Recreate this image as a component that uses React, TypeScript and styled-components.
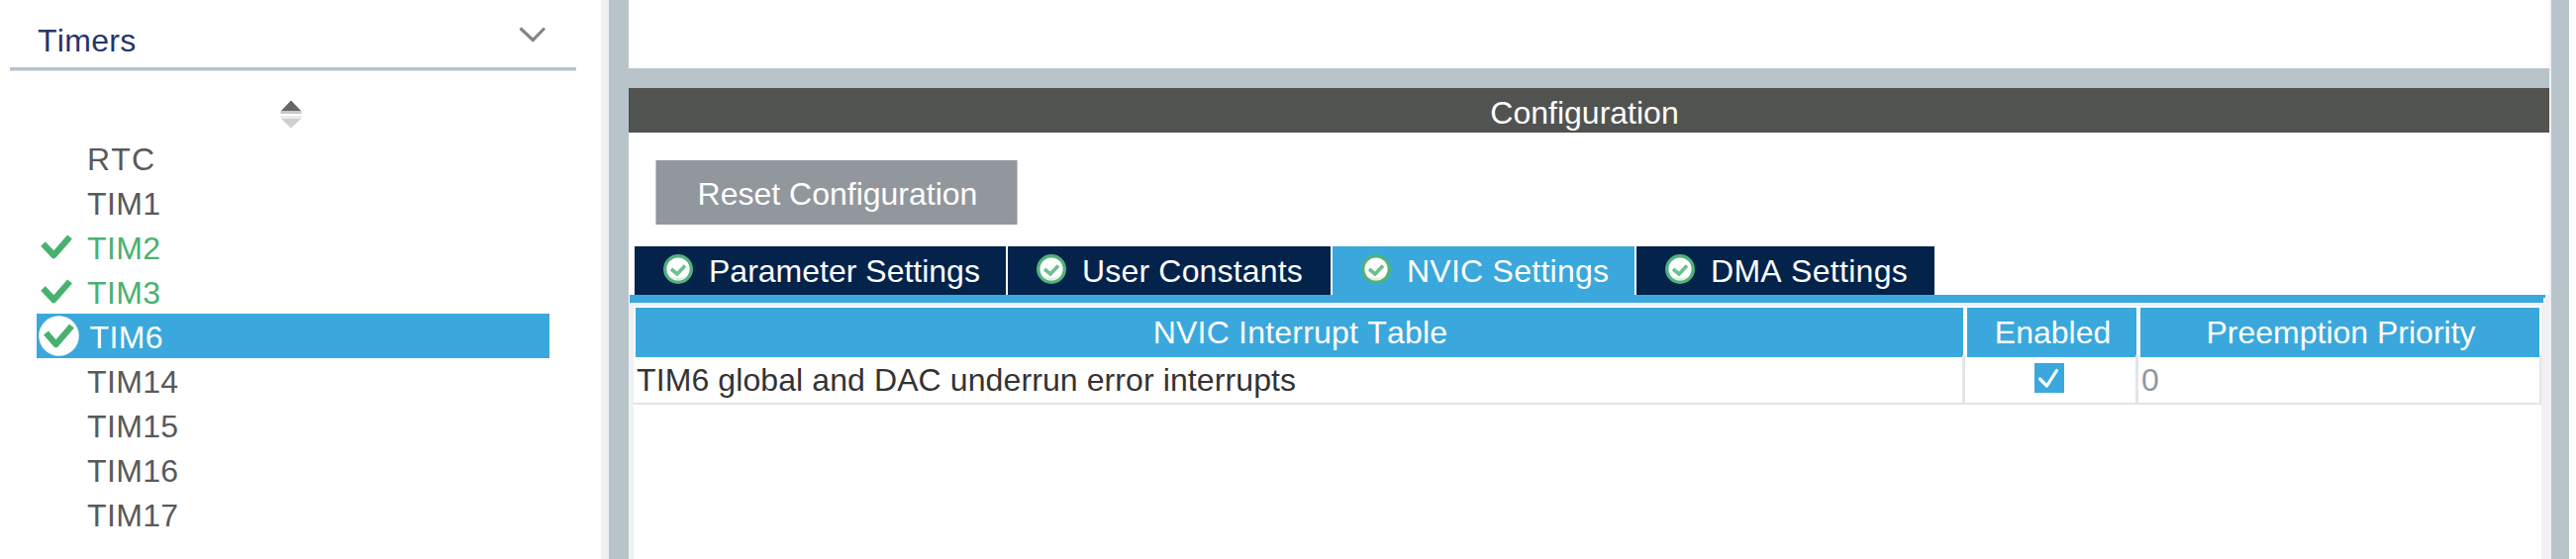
import React from "react";
import styled, { createGlobalStyle } from "styled-components";

const colors = {
  blue: "#3aa8dc",
  navy: "#03234b",
  steel: "#b8c4ca",
  light: "#f0f1f2",
  green: "#49b170",
  grid: "#e1e5e8",
};

const GlobalStyle = createGlobalStyle`
  * { box-sizing: border-box; }
  body {
    margin: 0;
    background: #fff;
    font-family: "Liberation Sans", Arial, sans-serif;
    font-size: 32px;
    font-kerning: none;
    white-space: nowrap;
    overflow: hidden;
  }
`;

const Window = styled.div`
  display: flex;
  width: 2602px;
  height: 565px;
  padding-right: 7px;
  background: #fff;
`;

const Sidebar = styled.aside`
  display: flex;
  flex-direction: column;
  width: 615px;
  border-right: 8px solid ${colors.light};
`;

const CategoryHeader = styled.div`
  display: flex;
  justify-content: space-between;
  height: 71px;
  width: 572px;
  margin-left: 10px;
  padding: 0 30px 0 28px;
  line-height: 82px;
  letter-spacing: 0.3px;
  color: #25356b;
  border-bottom: 3px solid ${colors.steel};
  box-shadow: 0 1px 0 #d6dff0;
`;

const ChevronIcon = styled.svg`
  width: 30px;
  height: 20px;
  margin-top: 27px;
`;

const SortRow = styled.div`
  height: 66px;
  padding: 29px 0 0 282px;
`;

const SortIcon = styled.svg`
  display: block;
  width: 24px;
  height: 32px;
`;

const List = styled.ul`
  list-style: none;
  margin: 0 0 0 37px;
  padding: 0;
  width: 518px;
`;

const Item = styled.li<{ $state?: "on" | "selected"; $spacing?: number }>`
  display: flex;
  height: 45px;
  line-height: 49px;
  letter-spacing: ${(p) => p.$spacing ?? 0.35}px;
  color: ${(p) => (p.$state === "selected" ? "#fff" : p.$state === "on" ? colors.green : "#595959")};
  background: ${(p) => (p.$state === "selected" ? colors.blue : "transparent")};
`;

const ItemIcon = styled.span<{ $wide?: boolean }>`
  width: ${(p) => (p.$wide ? 53.5 : 51)}px;
  height: 45px;
`;

const MarkSvg = styled.svg`
  display: block;
  width: 46px;
  height: 45px;
`;

const Divider = styled.div<{ $width: number }>`
  width: ${(p) => p.$width}px;
  background: ${colors.steel};
`;

const Main = styled.main`
  display: flex;
  flex-direction: column;
  width: 1942px;
  border-right: 2px solid ${colors.light};
`;

const UpperPane = styled.section`
  height: 89px;
  border-bottom: 20px solid ${colors.steel};
`;

const PaneTitle = styled.h2`
  margin: 0;
  height: 45px;
  padding-right: 9px;
  line-height: 50px;
  font-size: 32px;
  font-weight: normal;
  text-align: center;
  color: #fff;
  background: #515350;
`;

const Actions = styled.div`
  height: 115px;
  padding: 28px 0 0 27px;
`;

const ResetButton = styled.button`
  display: block;
  width: 366px;
  height: 65px;
  padding: 3px 0 0 2px;
  border: solid #c3c8cc;
  border-width: 0 1px;
  font: inherit;
  color: #fff;
  background: #91979d;
`;

const Tabs = styled.nav`
  display: flex;
  gap: 2px;
  height: 49px;
  padding-left: 6px;
`;

const Tab = styled.div<{ $width: number; $active?: boolean; $spacing: number }>`
  display: flex;
  width: ${(p) => p.$width}px;
  padding-left: 29px;
  line-height: 51px;
  letter-spacing: ${(p) => p.$spacing}px;
  color: #fff;
  background: ${(p) => (p.$active ? colors.blue : colors.navy)};
`;

const StatusSvg = styled.svg`
  width: 30px;
  height: 30px;
  margin: 8px 16px 0 0;
`;

const TabBody = styled.section`
  flex: 1;
  display: flex;
  flex-direction: column;
  background: ${colors.light};
`;

const TabUnderline = styled.div`
  width: 1936px;
  height: 8px;
  background: ${colors.blue};
  border-left: 1px solid #fff;
  clip-path: polygon(0 0, 100% 0, 100% 3px, 1934px 3px, 1934px 100%, 0 100%);
`;

const Table = styled.div`
  flex: 1;
  width: 1927px;
  margin: 3px 0 0 5px;
  padding-top: 2px;
  background: #fff;
`;

const HeadRow = styled.div`
  display: grid;
  grid-template-columns: 1341px 171px 403px;
  column-gap: 4px;
  height: 46px;
  margin-left: 2px;
`;

const HeadCell = styled.div<{ $spacing?: number }>`
  padding-left: 2px;
  line-height: 50px;
  text-align: center;
  letter-spacing: ${(p) => p.$spacing ?? 0}px;
  color: #fff;
  background: ${colors.blue};
`;

const BodyRow = styled.div`
  display: grid;
  grid-template-columns: 1345px 175px 407px;
  height: 52px;
  border-top: 2px solid #fff;
  border-bottom: 2px solid ${colors.grid};
`;

const Cell = styled.div<{ $muted?: boolean }>`
  padding-left: 3px;
  line-height: 50px;
  letter-spacing: 0.1px;
  color: ${(p) => (p.$muted ? "#8f989e" : "#333")};
  border-right: ${(p) => (p.$muted ? 2 : 3)}px solid ${colors.grid};
`;

const CheckCell = styled(Cell)`
  padding: 8px 0 0 70px;
`;

const CheckboxSvg = styled.svg`
  display: block;
  width: 30px;
  height: 30px;
  background: ${colors.blue};
`;

function Mark({ selected }: { selected?: boolean }) {
  return (
    <MarkSvg viewBox="0 0 46 45">
      {selected && <circle cx="22.5" cy="22.5" r="20.3" fill="#fff" />}
      <path
        d={selected ? "M9.5 19.5L19.5 31L35.5 12.5" : "M6.5 19.5L17.3 31L33.5 12.5"}
        fill="none"
        stroke={colors.green}
        strokeWidth="6.4"
        strokeLinejoin="round"
      />
    </MarkSvg>
  );
}

function StatusIcon() {
  return (
    <StatusSvg viewBox="0 0 30 30">
      <circle cx="15" cy="15" r="13.3" fill="#fff" stroke="#52b27c" strokeWidth="3.4" />
      <path d="M6.5 22A11 11 0 0 0 23.5 22Q15 26 6.5 22Z" fill="#dceee2" />
      <path d="M8 15L14 20L22 11.5" fill="none" stroke="#6cc090" strokeWidth="3.6" />
    </StatusSvg>
  );
}

const timers: { name: string; state?: "on" | "selected"; spacing?: number }[] = [
  { name: "RTC", spacing: 1.2 },
  { name: "TIM1" },
  { name: "TIM2", state: "on" },
  { name: "TIM3", state: "on" },
  { name: "TIM6", state: "selected" },
  { name: "TIM14" },
  { name: "TIM15" },
  { name: "TIM16" },
  { name: "TIM17" },
];

const tabs = [
  { label: "Parameter Settings", width: 375, spacing: 0 },
  { label: "User Constants", width: 326, spacing: 0.18 },
  { label: "NVIC Settings", width: 305, spacing: 0.25, active: true },
  { label: "DMA Settings", width: 301, spacing: 0.28 },
];

export default function App() {
  return (
    <>
      <GlobalStyle />
      <Window>
        <Sidebar>
          <CategoryHeader>
            Timers
            <ChevronIcon viewBox="0 0 30 20">
              <path d="M3.5 1.5L16.3 13.5L28 1.5" fill="none" stroke="#858585" strokeWidth="3.2" />
            </ChevronIcon>
          </CategoryHeader>
          <SortRow>
            <SortIcon viewBox="0 0 24 32">
              <path d="M12 1.5L22 12H2Z" fill="#666" />
              <path d="M1.5 12H22.5V15H1.5Z" fill="#c8c8c8" />
              <path d="M1.5 17H22.5V20H1.5Z" fill="#ebebeb" />
              <path d="M2 20H22L12 29.5Z" fill="#cfcfcf" />
            </SortIcon>
          </SortRow>
          <List>
            {timers.map((t) => (
              <Item key={t.name} $state={t.state} $spacing={t.spacing}>
                <ItemIcon $wide={t.state === "selected"}>
                  {t.state && <Mark selected={t.state === "selected"} />}
                </ItemIcon>
                {t.name}
              </Item>
            ))}
          </List>
        </Sidebar>
        <Divider $width={20} />
        <Main>
          <UpperPane />
          <PaneTitle>Configuration</PaneTitle>
          <Actions>
            <ResetButton>Reset Configuration</ResetButton>
          </Actions>
          <Tabs>
            {tabs.map((t) => (
              <Tab key={t.label} $width={t.width} $active={t.active} $spacing={t.spacing}>
                <StatusIcon />
                {t.label}
              </Tab>
            ))}
          </Tabs>
          <TabBody>
            <TabUnderline />
            <Table>
              <HeadRow>
                <HeadCell $spacing={0.2}>NVIC Interrupt Table</HeadCell>
                <HeadCell>Enabled</HeadCell>
                <HeadCell>Preemption Priority</HeadCell>
              </HeadRow>
              <BodyRow>
                <Cell>TIM6 global and DAC underrun error interrupts</Cell>
                <CheckCell>
                  <CheckboxSvg viewBox="0 0 30 30">
                    <path
                      d="M5.5 16L12.5 23L22.5 7.5"
                      fill="none"
                      stroke="#fff"
                      strokeWidth="3.2"
                      strokeLinecap="round"
                      strokeLinejoin="round"
                    />
                  </CheckboxSvg>
                </CheckCell>
                <Cell $muted>0</Cell>
              </BodyRow>
            </Table>
          </TabBody>
        </Main>
        <Divider $width={18} />
      </Window>
    </>
  );
}
